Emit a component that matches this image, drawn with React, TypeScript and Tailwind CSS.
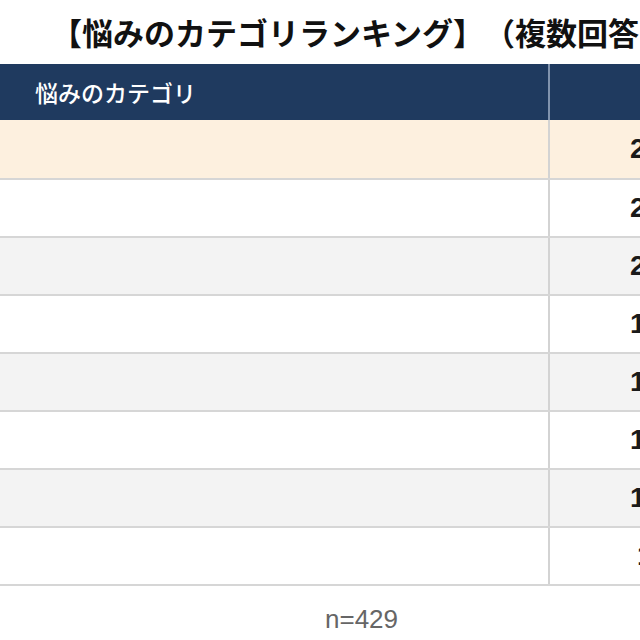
const rows = [
  { value: '25.4%', bg: 'bg-[#fdf0df]', h: 'h-[60px]', pad: 'pl-[80px]' },
  { value: '23.1%', bg: 'bg-white', h: 'h-[58px]', pad: 'pl-[80px]' },
  { value: '21.7%', bg: 'bg-[#f3f3f3]', h: 'h-[58px]', pad: 'pl-[80px]' },
  { value: '18.6%', bg: 'bg-white', h: 'h-[58px]', pad: 'pl-[80px]' },
  { value: '16.3%', bg: 'bg-[#f3f3f3]', h: 'h-[58px]', pad: 'pl-[80px]' },
  { value: '14.9%', bg: 'bg-white', h: 'h-[58px]', pad: 'pl-[80px]' },
  { value: '12.1%', bg: 'bg-[#f3f3f3]', h: 'h-[58px]', pad: 'pl-[80px]' },
  { value: '11.4%', bg: 'bg-white', h: 'h-[58px]', pad: 'pl-[87px]' },
]

export default function App() {
  return (
    <div
      className="w-[640px] h-[640px] overflow-hidden bg-white"
      style={{ fontFamily: '"Noto Sans CJK JP", "Noto Sans", sans-serif' }}
    >
      {/* Title */}
      <div className="h-[64px] pl-[51px] pt-[12px] whitespace-nowrap text-[31px] font-bold leading-[40px] text-[#111] [text-spacing-trim:space-all]">
        【悩みのカテゴリランキング】（複数回答）
      </div>

      {/* Table */}
      <div className="w-[800px]">
        <div className="flex h-[56px] bg-[#1f3a5f] text-white">
          <div className="w-[550px] shrink-0 border-r-2 border-[#8193ad] flex items-center pl-[35px] text-[23px] font-medium">
            悩みのカテゴリ
          </div>
          <div className="flex-1 flex items-center pl-[90px] text-[23px] font-medium">
            回答率
          </div>
        </div>

        {rows.map((r, i) => (
          <div key={i} className={`flex ${r.h} ${r.bg} border-b-2 border-[#d6d6d6]`}>
            <div className="w-[550px] shrink-0 border-r-2 border-[#d3d3d3]" />
            <div
              className={`flex-1 flex items-center ${r.pad} text-[28px] font-bold text-[#1a1a1a]`}
              style={{ fontFamily: '"Liberation Sans", Arial, sans-serif' }}
            >
              {r.value}
            </div>
          </div>
        ))}
      </div>

      {/* Footnote */}
      <div
        className="pt-[18px] pl-[325px] text-[26px] leading-[30px] text-[#666]"
        style={{ fontFamily: '"Liberation Sans", Arial, sans-serif' }}
      >
        n=429
      </div>
    </div>
  )
}
